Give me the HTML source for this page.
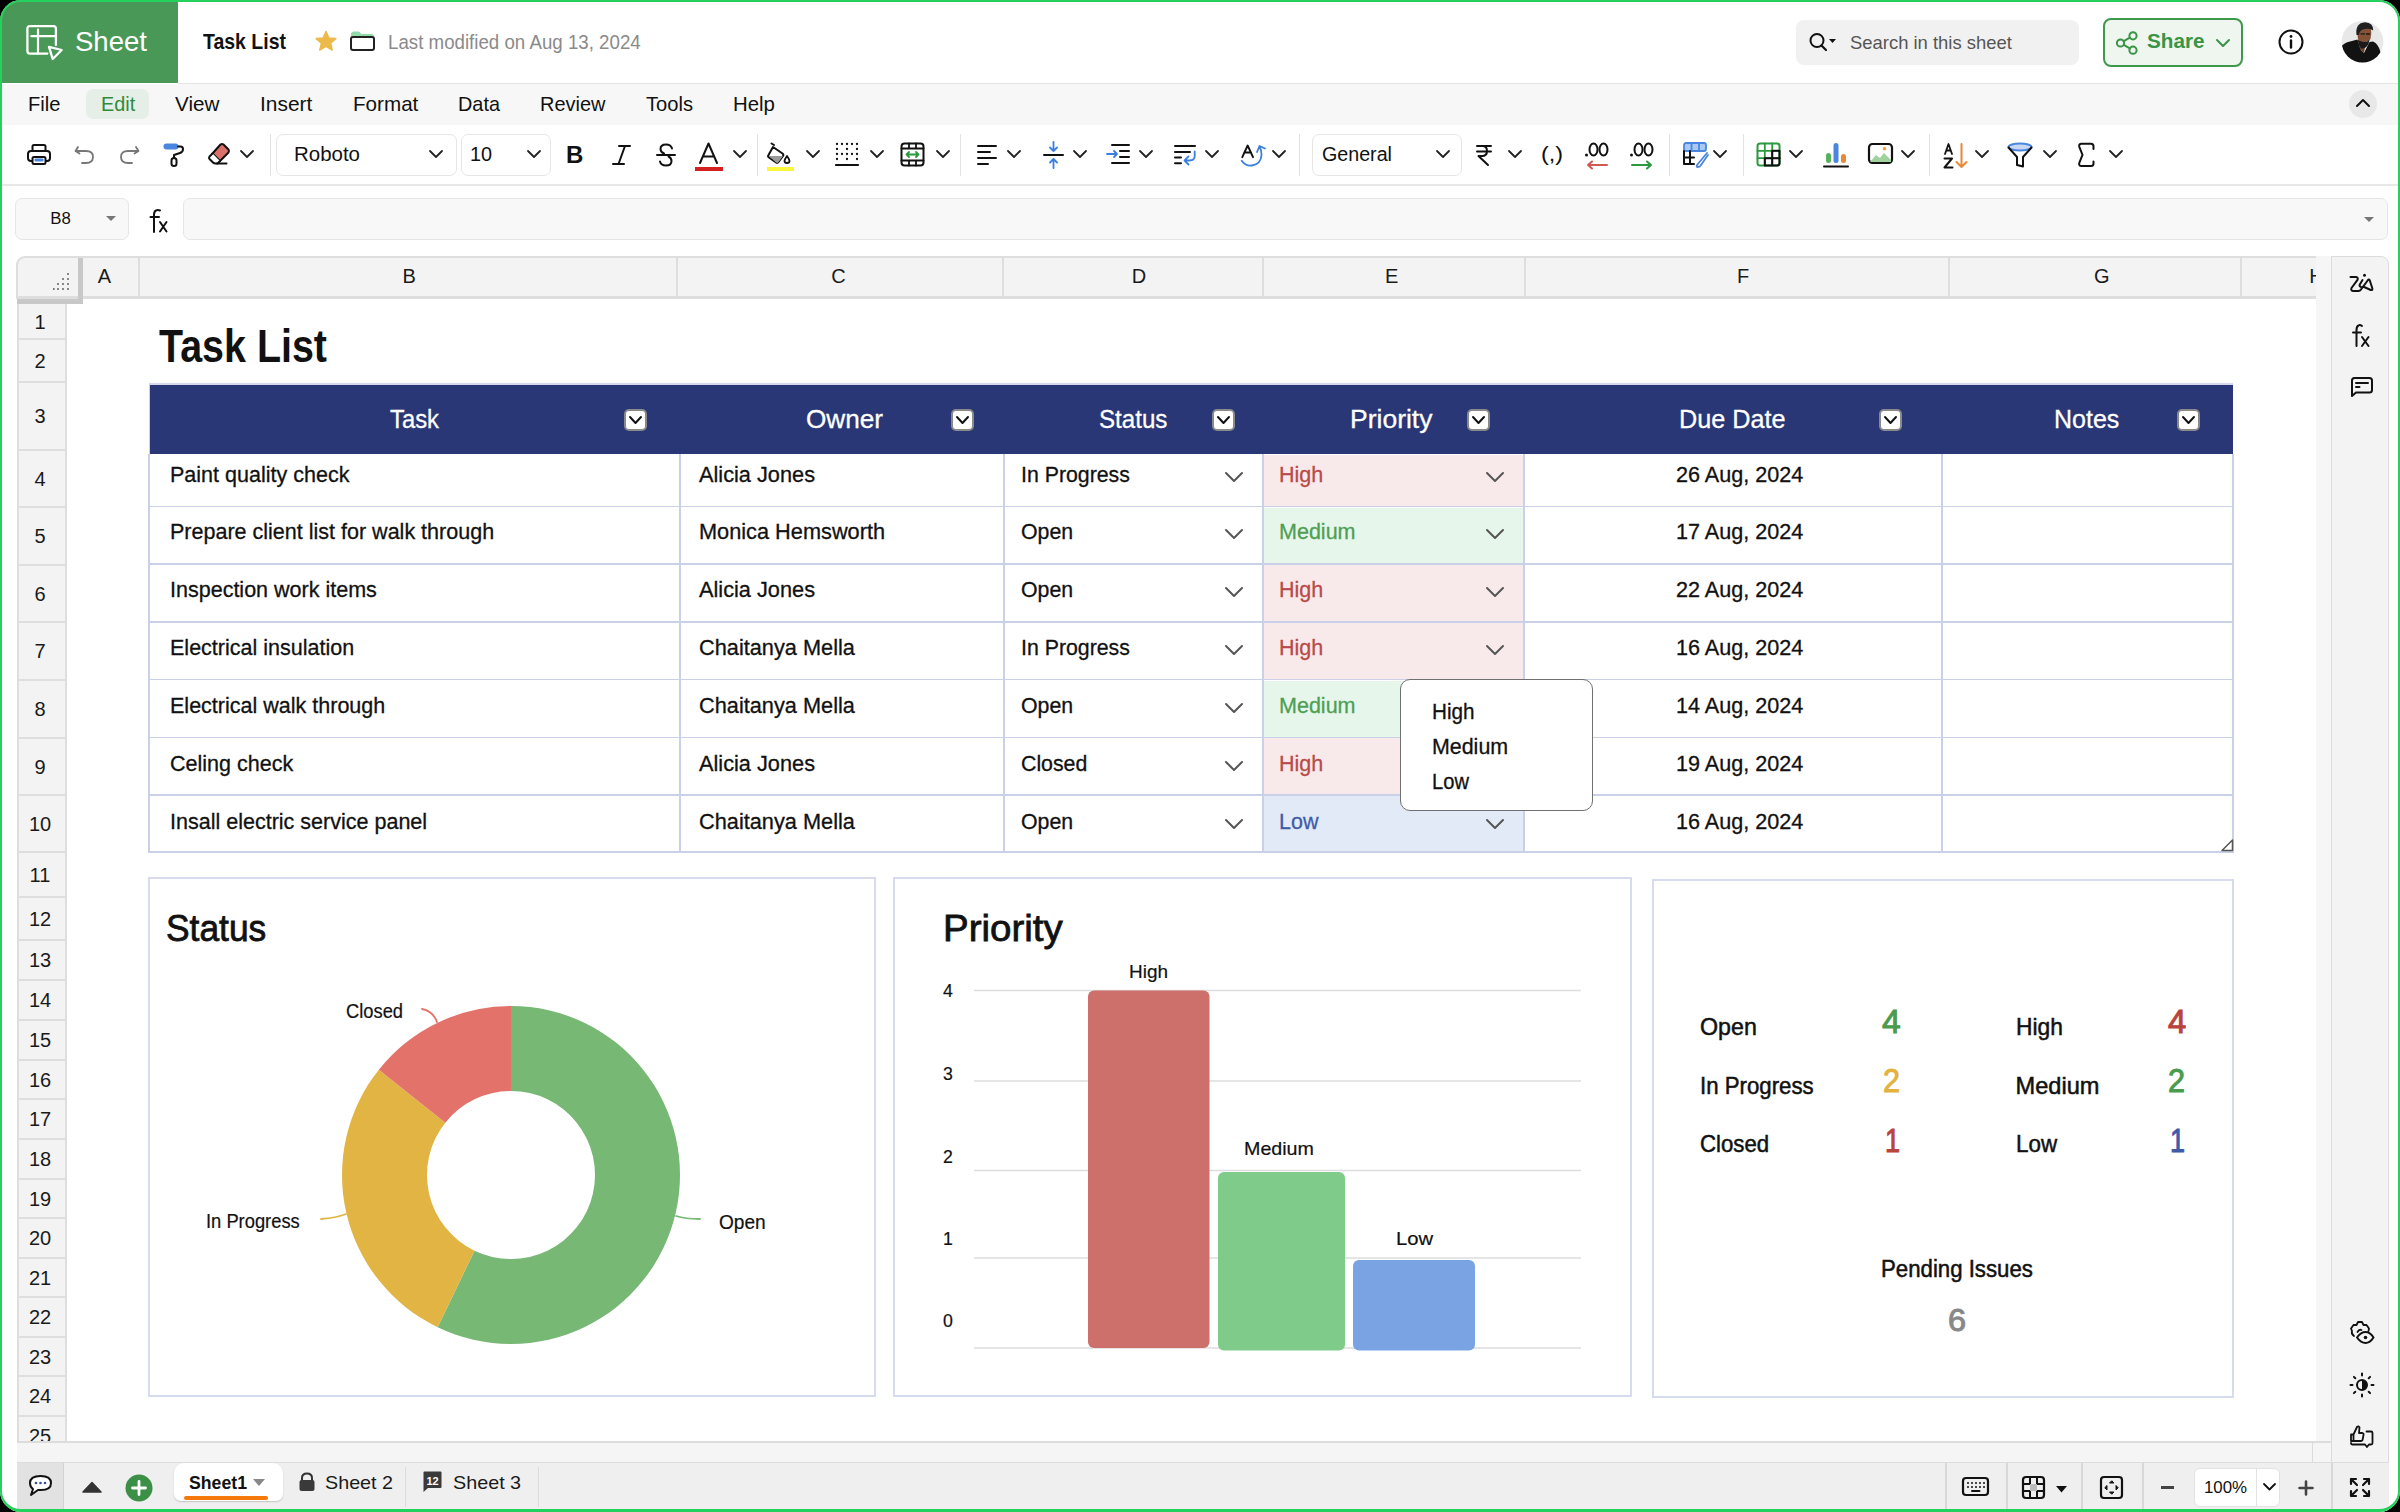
<!DOCTYPE html>
<html><head><meta charset="utf-8"><style>
html,body{margin:0;padding:0;width:2400px;height:1512px;overflow:hidden;background:#000;}
#win{position:absolute;left:0;top:0;width:2400px;height:1512px;border-radius:21px;overflow:hidden;background:#fff;font-family:"Liberation Sans", sans-serif;}
.t{position:absolute;line-height:1;white-space:nowrap;font-family:"Liberation Sans", sans-serif;}
.r{position:absolute;box-sizing:border-box;}
#frame{position:absolute;left:0;top:0;width:2400px;height:1512px;box-sizing:border-box;border:2px solid #24d15c;border-bottom-width:3px;border-radius:21px;pointer-events:none;}
</style></head><body><div id="win">
<div class="r" style="left:0px;top:0px;width:178px;height:83px;background:#4a9857;"></div><div class="r" style="left:178px;top:83px;width:2222px;height:1px;background:#e4e4e4;"></div><svg class="r" style="left:24px;top:24px;" width="40" height="40" viewBox="0 0 40 40" fill="none" stroke="#111" stroke-width="2" stroke-linecap="round" stroke-linejoin="round"><path d="M23.4 29.6 H5.9 Q3.4 29.6 3.4 27.1 V4.6 Q3.4 2.1 5.9 2.1 H29.4 Q31.9 2.1 31.9 4.6 V21" stroke="#fff" stroke-width="2.3"/><path d="M7.3 12.2 H31.9 M14 5.7 V29.6" stroke="#fff" stroke-width="2.2"/><path d="M25 22.8 L37.7 26 L28.7 35 Z" stroke="#fff" stroke-width="2.3"/></svg><div class="t" style="left:75.00px;top:28.11px;font-size:27.4px;color:#fff;transform:scaleX(1.0056);transform-origin:0 0;">Sheet</div><div class="t" style="left:203.00px;top:31.88px;font-size:21.4px;color:#111;font-weight:bold;transform:scaleX(0.9101);transform-origin:0 0;">Task List</div><svg class="r" style="left:314px;top:30px;" width="24" height="22" viewBox="0 0 24 22" fill="none" stroke="#111" stroke-width="2" stroke-linecap="round" stroke-linejoin="round"><path d="M12 1.5 L14.9 8 L21.8 8.6 L16.6 13.2 L18.2 20 L12 16.4 L5.8 20 L7.4 13.2 L2.2 8.6 L9.1 8 Z" fill="#ecb94b" stroke="#ecb94b" stroke-width="1.5"/></svg><svg class="r" style="left:349px;top:29px;" width="27" height="23" viewBox="0 0 27 23" fill="none" stroke="#111" stroke-width="2" stroke-linecap="round" stroke-linejoin="round"><path d="M2.5 8 V5 Q2.5 3 4.5 3 H10 L12.5 5.5 H22.5 Q24.5 5.5 24.5 7.5 V8 Z" fill="#8fdcaa" stroke="#8fdcaa" stroke-width="1"/><rect x="2" y="8" width="23" height="13" rx="2" stroke="#222" stroke-width="2"/></svg><div class="t" style="left:387.50px;top:33.06px;font-size:19.3px;color:#8a8a8a;transform:scaleX(0.9701);transform-origin:0 0;">Last modified on Aug 13, 2024</div><div class="r" style="left:1796px;top:20px;width:283px;height:45px;background:#f1f1f1;border-radius:8px;"></div><svg class="r" style="left:1808px;top:32px;" width="34" height="22" viewBox="0 0 34 22" fill="none" stroke="#111" stroke-width="2" stroke-linecap="round" stroke-linejoin="round"><circle cx="9" cy="8.5" r="6.5" stroke="#111" stroke-width="2"/><path d="M13.5 13.5 L18 18" stroke="#111" stroke-width="2.2"/><path d="M21 7 H28 L24.5 11 Z" fill="#111" stroke="none"/></svg><div class="t" style="left:1850.00px;top:34.26px;font-size:18.6px;color:#555;transform:scaleX(0.9914);transform-origin:0 0;">Search in this sheet</div><div class="r" style="left:2103px;top:18px;width:140px;height:49px;background:#eef6ef;border:2px solid #3e9a4a;border-radius:8px;"></div><svg class="r" style="left:2115px;top:31px;" width="26" height="24" viewBox="0 0 26 24" fill="none" stroke="#111" stroke-width="2" stroke-linecap="round" stroke-linejoin="round"><circle cx="5.5" cy="12" r="3.6" stroke="#3a9446" stroke-width="2"/><circle cx="18" cy="4.8" r="3.6" stroke="#3a9446" stroke-width="2"/><circle cx="18" cy="19.2" r="3.6" stroke="#3a9446" stroke-width="2"/><path d="M8.8 10.2 L14.8 6.6 M8.8 13.8 L14.8 17.4" stroke="#3a9446" stroke-width="2"/></svg><div class="t" style="left:2146.50px;top:31.19px;font-size:20.8px;color:#3a9446;font-weight:bold;transform:scaleX(0.9948);transform-origin:0 0;">Share</div><svg class="r" style="left:2215.0px;top:38.0px;" width="16" height="10" viewBox="0 0 16 10" fill="none" stroke="#111" stroke-width="2" stroke-linecap="round" stroke-linejoin="round"><path d="M2 2 L8.0 8 L14 2" stroke="#3a9446" stroke-width="2"/></svg><svg class="r" style="left:2277px;top:28px;" width="28" height="28" viewBox="0 0 28 28" fill="none" stroke="#111" stroke-width="2" stroke-linecap="round" stroke-linejoin="round"><circle cx="14" cy="14" r="11.5" stroke="#111" stroke-width="2"/><path d="M14 12.5 V19.5" stroke="#111" stroke-width="2.4"/><circle cx="14" cy="8.5" r="1.4" fill="#111" stroke="none"/></svg><svg class="r" style="left:2340px;top:20px;" width="46" height="46" viewBox="0 0 46 46" fill="none" stroke="#111" stroke-width="2" stroke-linecap="round" stroke-linejoin="round"><defs><clipPath id="av"><circle cx="22.5" cy="21.7" r="20.8"/></clipPath></defs><g clip-path="url(#av)" stroke="none"><rect width="46" height="46" fill="#e8e8e8"/><path d="M1 27 Q4 22.5 10 21.5 L17.5 19.5 L21 30 L24 33 L29.5 22 L33 21.5 Q38.5 24 40.5 32 L43 46 L0 46 Z" fill="#121212"/><path d="M18 21 L26 21 L24 33 L20 29 Z" fill="#6e4129"/><path d="M17.2 12 Q17 6 24 5.5 Q31.5 6 31.3 13 L30.5 19 Q28 22 24 22 Q19.5 22 18 19 Z" fill="#865235"/><path d="M16.5 15 Q15 3 25 2.2 Q33.5 2.5 33.2 10.5 L31 9.5 Q27 8 23 9.5 Q19.5 10.5 18.8 15 Z" fill="#202020"/><path d="M18 19.5 Q18.5 26 21.5 28.5 Q25.5 29 28.5 24 L29.6 19.5 Q27 22.5 23.5 22 Q20.5 21.8 18 19.5 Z" fill="#1a1a1a"/><path d="M21 13.8 H24.5 M26.5 14 H29.5" stroke="#1a1a1a" stroke-width="1.3"/></g></svg><div class="r" style="left:0px;top:84px;width:2400px;height:41px;background:#f7f7f7;"></div><div class="r" style="left:86px;top:89px;width:63px;height:30px;background:#e6efe7;border-radius:7px;"></div><div class="t" style="left:28.00px;top:94.02px;font-size:20.3px;color:#111;transform:scaleX(0.9908);transform-origin:0 0;">File</div><div class="t" style="left:100.60px;top:94.02px;font-size:20.3px;color:#2e8b3b;transform:scaleX(0.9771);transform-origin:0 0;">Edit</div><div class="t" style="left:175.00px;top:94.02px;font-size:20.3px;color:#111;transform:scaleX(1.0183);transform-origin:0 0;">View</div><div class="t" style="left:260.00px;top:94.02px;font-size:20.3px;color:#111;transform:scaleX(1.0315);transform-origin:0 0;">Insert</div><div class="t" style="left:352.60px;top:94.02px;font-size:20.3px;color:#111;transform:scaleX(1.0171);transform-origin:0 0;">Format</div><div class="t" style="left:457.80px;top:94.02px;font-size:20.3px;color:#111;transform:scaleX(0.9790);transform-origin:0 0;">Data</div><div class="t" style="left:540.00px;top:94.02px;font-size:20.3px;color:#111;transform:scaleX(0.9835);transform-origin:0 0;">Review</div><div class="t" style="left:645.90px;top:94.02px;font-size:20.3px;color:#111;transform:scaleX(0.9937);transform-origin:0 0;">Tools</div><div class="t" style="left:733.40px;top:94.02px;font-size:20.3px;color:#111;transform:scaleX(1.0048);transform-origin:0 0;">Help</div><div class="r" style="left:2349px;top:90px;width:28px;height:28px;background:#e8e8e8;border-radius:50%;"></div><svg class="r" style="left:2355px;top:98px;" width="16" height="10" viewBox="0 0 16 10" fill="none" stroke="#111" stroke-width="2" stroke-linecap="round" stroke-linejoin="round"><path d="M2 8 L8 2 L14 8" stroke="#111" stroke-width="2"/></svg><div class="r" style="left:0px;top:184px;width:2400px;height:2px;background:#e8e8e8;"></div><svg class="r" style="left:26px;top:142px;" width="26" height="26" viewBox="0 0 26 26" fill="none" stroke="#111" stroke-width="2" stroke-linecap="round" stroke-linejoin="round"><rect x="6.5" y="3" width="13" height="6" rx="1.5"/><rect x="2" y="9" width="22" height="10" rx="3"/><rect x="6.5" y="15" width="13" height="7" rx="1.5" fill="#fff"/><rect x="8.5" y="16.5" width="9" height="3" rx="1" fill="#4a86e0" stroke="none"/></svg><svg class="r" style="left:73px;top:143px;" width="24" height="24" viewBox="0 0 24 24" fill="none" stroke="#111" stroke-width="2" stroke-linecap="round" stroke-linejoin="round"><path d="M5 4 L2.5 8 L6.5 10.5" stroke="#777" stroke-width="1.8"/><path d="M3 8 H13 Q20 8 20 14 Q20 20 13 20 H9" stroke="#777" stroke-width="1.8"/></svg><svg class="r" style="left:117px;top:143px;" width="24" height="24" viewBox="0 0 24 24" fill="none" stroke="#111" stroke-width="2" stroke-linecap="round" stroke-linejoin="round"><path d="M19 4 L21.5 8 L17.5 10.5" stroke="#777" stroke-width="1.8"/><path d="M21 8 H11 Q4 8 4 14 Q4 20 11 20 H15" stroke="#777" stroke-width="1.8"/></svg><svg class="r" style="left:161px;top:142px;" width="26" height="26" viewBox="0 0 26 26" fill="none" stroke="#111" stroke-width="2" stroke-linecap="round" stroke-linejoin="round"><rect x="2.5" y="1.5" width="15" height="6" rx="3" fill="#4a86e0" stroke="none"/><path d="M17 4.5 H19.5 Q22 4.5 22 7 Q22 10 19 11 L13 13 V16" stroke="#111" stroke-width="2"/><rect x="10.5" y="16" width="5" height="8" rx="2.5" stroke="#111" stroke-width="2"/></svg><svg class="r" style="left:207px;top:142px;" width="28" height="26" viewBox="0 0 28 26" fill="none" stroke="#111" stroke-width="2" stroke-linecap="round" stroke-linejoin="round"><path d="M13.5 2.5 Q15 1.5 16.5 2.5 L21.5 7.5 Q22.5 9 21.5 10.5 L13 19 L5.5 11.5 Z" fill="#d9706a" stroke="#111" stroke-width="2"/><path d="M5.5 11.5 L2.5 14.5 Q1.5 16 2.5 17 L6 20.5 Q7 21.5 8.5 21.5 H10.5 L13 19" stroke="#111" stroke-width="2" fill="#fff"/><path d="M10 21.5 H19.5" stroke="#111" stroke-width="2"/></svg><svg class="r" style="left:239.0px;top:149.0px;" width="16" height="10" viewBox="0 0 16 10" fill="none" stroke="#111" stroke-width="2" stroke-linecap="round" stroke-linejoin="round"><path d="M2 2 L8.0 8 L14 2" stroke="#222" stroke-width="1.8"/></svg><div class="r" style="left:270px;top:134px;width:1px;height:42px;background:#e2e2e2;"></div><div class="r" style="left:276px;top:134px;width:181px;height:42px;border:1.5px solid #e6e6e6;border-radius:7px;"></div><div class="t" style="left:294.00px;top:144.07px;font-size:20px;color:#111;transform:scaleX(1.0233);transform-origin:0 0;">Roboto</div><svg class="r" style="left:428.0px;top:149.0px;" width="16" height="10" viewBox="0 0 16 10" fill="none" stroke="#111" stroke-width="2" stroke-linecap="round" stroke-linejoin="round"><path d="M2 2 L8.0 8 L14 2" stroke="#222" stroke-width="1.8"/></svg><div class="r" style="left:461px;top:134px;width:90px;height:42px;border:1.5px solid #e6e6e6;border-radius:7px;"></div><div class="t" style="left:470.00px;top:144.07px;font-size:20px;color:#111;transform:scaleX(0.9910);transform-origin:0 0;">10</div><svg class="r" style="left:526.0px;top:149.0px;" width="16" height="10" viewBox="0 0 16 10" fill="none" stroke="#111" stroke-width="2" stroke-linecap="round" stroke-linejoin="round"><path d="M2 2 L8.0 8 L14 2" stroke="#222" stroke-width="1.8"/></svg><div class="t" style="left:566.00px;top:143.18px;font-size:24px;color:#111;font-weight:bold;">B</div><svg class="r" style="left:610px;top:143px;" width="22" height="24" viewBox="0 0 22 24" fill="none" stroke="#111" stroke-width="2" stroke-linecap="round" stroke-linejoin="round"><path d="M9 3 H20 M3 21 H14 M15 3 L8.5 21" stroke="#111" stroke-width="2"/></svg><svg class="r" style="left:655px;top:141px;" width="22" height="28" viewBox="0 0 22 28" fill="none" stroke="#111" stroke-width="2" stroke-linecap="round" stroke-linejoin="round"><path d="M17 7.5 Q16 3.5 11 3.5 Q5.5 3.5 5.5 8 Q5.5 11 9 12.5 M2 14 H20 M13.5 15.5 Q16.5 17 16.5 20 Q16.5 24.5 11 24.5 Q6 24.5 5 20.5" stroke="#111" stroke-width="2"/></svg><svg class="r" style="left:694px;top:141px;" width="30" height="32" viewBox="0 0 30 32" fill="none" stroke="#111" stroke-width="2" stroke-linecap="round" stroke-linejoin="round"><path d="M6 22 L14.5 2.5 L23 22 M9 15.5 H20" stroke="#111" stroke-width="2"/><rect x="1" y="26" width="28" height="4" fill="#d42020" stroke="none"/></svg><svg class="r" style="left:732.0px;top:149.0px;" width="16" height="10" viewBox="0 0 16 10" fill="none" stroke="#111" stroke-width="2" stroke-linecap="round" stroke-linejoin="round"><path d="M2 2 L8.0 8 L14 2" stroke="#222" stroke-width="1.8"/></svg><div class="r" style="left:757px;top:134px;width:1px;height:42px;background:#e2e2e2;"></div><svg class="r" style="left:765px;top:141px;" width="32" height="32" viewBox="0 0 32 32" fill="none" stroke="#111" stroke-width="2" stroke-linecap="round" stroke-linejoin="round"><path d="M9 4 L6.5 2.5 M8 6 L17.5 12.5 Q19 13.5 18 15 L13.5 21 Q12.5 22.5 11 21.5 L4 16.5 Q2.5 15.5 3.5 14 Z" stroke="#111" stroke-width="2"/><path d="M4 15 L18 15 L13.5 21 Q12.5 22.5 11 21.5 Z" fill="#999" stroke="none"/><path d="M22 15 Q24.5 18.5 24.5 20 Q24.5 22 22 22 Q19.5 22 19.5 20 Q19.5 18.5 22 15 Z" stroke="#111" stroke-width="1.8"/><rect x="2" y="26" width="27" height="4" fill="#fbf53c" stroke="none"/></svg><svg class="r" style="left:805.0px;top:149.0px;" width="16" height="10" viewBox="0 0 16 10" fill="none" stroke="#111" stroke-width="2" stroke-linecap="round" stroke-linejoin="round"><path d="M2 2 L8.0 8 L14 2" stroke="#222" stroke-width="1.8"/></svg><svg class="r" style="left:835px;top:142px;" width="26" height="26" viewBox="0 0 26 26" fill="none" stroke="#111" stroke-width="2" stroke-linecap="round" stroke-linejoin="round"><circle cx="2" cy="2" r="1.15" fill="#111" stroke="none"/><circle cx="2" cy="7" r="1.15" fill="#111" stroke="none"/><circle cx="2" cy="12" r="1.15" fill="#111" stroke="none"/><circle cx="2" cy="17" r="1.15" fill="#111" stroke="none"/><circle cx="7" cy="2" r="1.15" fill="#111" stroke="none"/><circle cx="7" cy="12" r="1.15" fill="#111" stroke="none"/><circle cx="12" cy="2" r="1.15" fill="#111" stroke="none"/><circle cx="12" cy="7" r="1.15" fill="#111" stroke="none"/><circle cx="12" cy="12" r="1.15" fill="#111" stroke="none"/><circle cx="12" cy="17" r="1.15" fill="#111" stroke="none"/><circle cx="17" cy="2" r="1.15" fill="#111" stroke="none"/><circle cx="17" cy="12" r="1.15" fill="#111" stroke="none"/><circle cx="22" cy="2" r="1.15" fill="#111" stroke="none"/><circle cx="22" cy="7" r="1.15" fill="#111" stroke="none"/><circle cx="22" cy="12" r="1.15" fill="#111" stroke="none"/><circle cx="22" cy="17" r="1.15" fill="#111" stroke="none"/><path d="M1 23 H23" stroke="#111" stroke-width="2.2"/></svg><svg class="r" style="left:869.0px;top:149.0px;" width="16" height="10" viewBox="0 0 16 10" fill="none" stroke="#111" stroke-width="2" stroke-linecap="round" stroke-linejoin="round"><path d="M2 2 L8.0 8 L14 2" stroke="#222" stroke-width="1.8"/></svg><svg class="r" style="left:900px;top:142px;" width="26" height="26" viewBox="0 0 26 26" fill="none" stroke="#111" stroke-width="2" stroke-linecap="round" stroke-linejoin="round"><rect x="1.5" y="1.5" width="22" height="22" rx="3" stroke="#111" stroke-width="2"/><path d="M1.5 6.5 H23.5 M1.5 18.5 H23.5 M9 1.5 V6.5 M16 1.5 V6.5 M9 18.5 V23.5 M16 18.5 V23.5" stroke="#111" stroke-width="1.8"/><path d="M6.5 12.5 H18.5 M9 10 L6.5 12.5 L9 15 M16 10 L18.5 12.5 L16 15" stroke="#2b9a3e" stroke-width="1.8"/></svg><svg class="r" style="left:935.0px;top:149.0px;" width="16" height="10" viewBox="0 0 16 10" fill="none" stroke="#111" stroke-width="2" stroke-linecap="round" stroke-linejoin="round"><path d="M2 2 L8.0 8 L14 2" stroke="#222" stroke-width="1.8"/></svg><div class="r" style="left:960px;top:134px;width:1px;height:42px;background:#e2e2e2;"></div><svg class="r" style="left:976px;top:142px;" width="24" height="26" viewBox="0 0 24 26" fill="none" stroke="#111" stroke-width="2" stroke-linecap="round" stroke-linejoin="round"><path d="M2 4 H20 M2 10 H14 M2 16 H20 M2 22 H12" stroke="#111" stroke-width="2"/></svg><svg class="r" style="left:1006.0px;top:149.0px;" width="16" height="10" viewBox="0 0 16 10" fill="none" stroke="#111" stroke-width="2" stroke-linecap="round" stroke-linejoin="round"><path d="M2 2 L8.0 8 L14 2" stroke="#222" stroke-width="1.8"/></svg><svg class="r" style="left:1042px;top:140px;" width="24" height="30" viewBox="0 0 24 30" fill="none" stroke="#111" stroke-width="2" stroke-linecap="round" stroke-linejoin="round"><path d="M2 15 H21" stroke="#111" stroke-width="2"/><path d="M11.5 2 V11 M8 7.5 L11.5 11 L15 7.5 M11.5 28 V19 M8 22.5 L11.5 19 L15 22.5" stroke="#3a7ee0" stroke-width="1.8"/></svg><svg class="r" style="left:1072.0px;top:149.0px;" width="16" height="10" viewBox="0 0 16 10" fill="none" stroke="#111" stroke-width="2" stroke-linecap="round" stroke-linejoin="round"><path d="M2 2 L8.0 8 L14 2" stroke="#222" stroke-width="1.8"/></svg><svg class="r" style="left:1106px;top:142px;" width="26" height="26" viewBox="0 0 26 26" fill="none" stroke="#111" stroke-width="2" stroke-linecap="round" stroke-linejoin="round"><path d="M6 3 H23 M14 9 H23 M14 15 H23 M6 21 H23" stroke="#111" stroke-width="2"/><path d="M1 12 H11 M8 9 L11 12 L8 15" stroke="#3a7ee0" stroke-width="1.8"/></svg><svg class="r" style="left:1138.0px;top:149.0px;" width="16" height="10" viewBox="0 0 16 10" fill="none" stroke="#111" stroke-width="2" stroke-linecap="round" stroke-linejoin="round"><path d="M2 2 L8.0 8 L14 2" stroke="#222" stroke-width="1.8"/></svg><svg class="r" style="left:1172px;top:142px;" width="28" height="26" viewBox="0 0 28 26" fill="none" stroke="#111" stroke-width="2" stroke-linecap="round" stroke-linejoin="round"><path d="M3 4.1 H23 M3 9.9 H18 M3 15.5 H9 M3 21.3 H9" stroke="#111" stroke-width="2"/><path d="M22.7 9.5 V14 Q22.7 18.5 17.5 18.5 H12.5 M16.5 14.4 L12.5 18.5 L16.5 22.5" stroke="#3a7ee0" stroke-width="1.8"/></svg><svg class="r" style="left:1204.0px;top:149.0px;" width="16" height="10" viewBox="0 0 16 10" fill="none" stroke="#111" stroke-width="2" stroke-linecap="round" stroke-linejoin="round"><path d="M2 2 L8.0 8 L14 2" stroke="#222" stroke-width="1.8"/></svg><svg class="r" style="left:1239px;top:140px;" width="28" height="30" viewBox="0 0 28 30" fill="none" stroke="#111" stroke-width="2" stroke-linecap="round" stroke-linejoin="round"><path d="M3.3 17.2 L8.65 5.5 L14 17.2 M5.2 12.5 H12.1" stroke="#111" stroke-width="1.9"/><path d="M2.7 20.7 Q7 26.5 13 25.5 Q22 24 22.5 15 Q22.5 10 20.5 6.5 M18 12 L20.5 6 L26 8.5" stroke="#3a7ee0" stroke-width="1.8"/></svg><svg class="r" style="left:1271.0px;top:149.0px;" width="16" height="10" viewBox="0 0 16 10" fill="none" stroke="#111" stroke-width="2" stroke-linecap="round" stroke-linejoin="round"><path d="M2 2 L8.0 8 L14 2" stroke="#222" stroke-width="1.8"/></svg><div class="r" style="left:1299px;top:134px;width:1px;height:42px;background:#e2e2e2;"></div><div class="r" style="left:1312px;top:134px;width:150px;height:42px;border:1.5px solid #e6e6e6;border-radius:7px;"></div><div class="t" style="left:1322.00px;top:144.07px;font-size:20px;color:#111;transform:scaleX(0.9831);transform-origin:0 0;">General</div><svg class="r" style="left:1435.0px;top:149.0px;" width="16" height="10" viewBox="0 0 16 10" fill="none" stroke="#111" stroke-width="2" stroke-linecap="round" stroke-linejoin="round"><path d="M2 2 L8.0 8 L14 2" stroke="#222" stroke-width="1.8"/></svg><svg class="r" style="left:1474px;top:142px;" width="20" height="26" viewBox="0 0 20 26" fill="none" stroke="#111" stroke-width="2" stroke-linecap="round" stroke-linejoin="round"><path d="M3 4 H17 M3 9.5 H17 M5 4 H8.5 Q13 4 13 9 Q13 14 8 14 H4.5 L14 23" stroke="#111" stroke-width="2"/></svg><svg class="r" style="left:1507.0px;top:149.0px;" width="16" height="10" viewBox="0 0 16 10" fill="none" stroke="#111" stroke-width="2" stroke-linecap="round" stroke-linejoin="round"><path d="M2 2 L8.0 8 L14 2" stroke="#222" stroke-width="1.8"/></svg><div class="t" style="left:1540.70px;top:142.72px;font-size:21px;color:#111;transform:scaleX(1.1111);transform-origin:0 0;">(,)</div><svg class="r" style="left:1584px;top:141px;" width="26" height="30" viewBox="0 0 26 30" fill="none" stroke="#111" stroke-width="2" stroke-linecap="round" stroke-linejoin="round"><circle cx="2.5" cy="14" r="1.5" fill="#111" stroke="none"/><ellipse cx="9.5" cy="8.5" rx="4" ry="6" stroke="#111" stroke-width="2"/><ellipse cx="19.5" cy="8.5" rx="4" ry="6" stroke="#111" stroke-width="2"/><path d="M23 24 H4 M8 20.5 L4 24 L8 27.5" stroke="#d05a52" stroke-width="2"/></svg><svg class="r" style="left:1629px;top:141px;" width="26" height="30" viewBox="0 0 26 30" fill="none" stroke="#111" stroke-width="2" stroke-linecap="round" stroke-linejoin="round"><circle cx="2.5" cy="14" r="1.5" fill="#111" stroke="none"/><ellipse cx="9.5" cy="8.5" rx="4" ry="6" stroke="#111" stroke-width="2"/><ellipse cx="19.5" cy="8.5" rx="4" ry="6" stroke="#111" stroke-width="2"/><path d="M3 24 H22 M18 20.5 L22 24 L18 27.5" stroke="#2b9a3e" stroke-width="2"/></svg><div class="r" style="left:1669px;top:134px;width:1px;height:42px;background:#e2e2e2;"></div><svg class="r" style="left:1682px;top:141px;" width="30" height="30" viewBox="0 0 30 30" fill="none" stroke="#111" stroke-width="2" stroke-linecap="round" stroke-linejoin="round"><rect x="2" y="2" width="22" height="8" rx="2" fill="#a9c8f2" stroke="#4a86e0" stroke-width="1.8"/><path d="M9.5 2 V10 M17 2 V10" stroke="#4a86e0" stroke-width="1.8"/><path d="M2 10 V23 H12 M2 16.5 H12 M8 10 V23" stroke="#111" stroke-width="2"/><path d="M25 12 L15 24 Q14 26 16 26 Q18 26 19 24 L26 14" stroke="#4a86e0" stroke-width="1.8"/></svg><svg class="r" style="left:1712.0px;top:149.0px;" width="16" height="10" viewBox="0 0 16 10" fill="none" stroke="#111" stroke-width="2" stroke-linecap="round" stroke-linejoin="round"><path d="M2 2 L8.0 8 L14 2" stroke="#222" stroke-width="1.8"/></svg><div class="r" style="left:1743px;top:134px;width:1px;height:42px;background:#e2e2e2;"></div><svg class="r" style="left:1756px;top:142px;" width="26" height="26" viewBox="0 0 26 26" fill="none" stroke="#111" stroke-width="2" stroke-linecap="round" stroke-linejoin="round"><rect x="1.5" y="1.5" width="22" height="22" rx="2.5" stroke="#2b9a3e" stroke-width="2"/><path d="M1.5 8.8 H23.5 M1.5 16.2 H23.5 M8.8 1.5 V23.5 M16.2 1.5 V23.5" stroke="#2b9a3e" stroke-width="1.8"/><path d="M8.8 16.2 H23.5 V21 Q23.5 23.5 21 23.5 H8.8 Z M16.2 16.2 V23.5" stroke="#111" stroke-width="2"/><path d="M16.2 8.8 H23.5 V16.2 M16.2 8.8 V16.2" stroke="#111" stroke-width="2"/></svg><svg class="r" style="left:1788.0px;top:149.0px;" width="16" height="10" viewBox="0 0 16 10" fill="none" stroke="#111" stroke-width="2" stroke-linecap="round" stroke-linejoin="round"><path d="M2 2 L8.0 8 L14 2" stroke="#222" stroke-width="1.8"/></svg><svg class="r" style="left:1822px;top:141px;" width="28" height="28" viewBox="0 0 28 28" fill="none" stroke="#111" stroke-width="2" stroke-linecap="round" stroke-linejoin="round"><rect x="4" y="12" width="5" height="10" rx="2.5" fill="#57b25c" stroke="none"/><rect x="11.5" y="2" width="5" height="20" rx="2.5" fill="#4a86e0" stroke="none"/><rect x="19" y="13" width="5" height="9" rx="2.5" fill="#e8893a" stroke="none"/><path d="M2 25.5 H26" stroke="#111" stroke-width="2"/></svg><svg class="r" style="left:1867px;top:142px;" width="28" height="24" viewBox="0 0 28 24" fill="none" stroke="#111" stroke-width="2" stroke-linecap="round" stroke-linejoin="round"><rect x="2" y="2" width="23" height="19" rx="3.5" stroke="#111" stroke-width="2.2"/><path d="M3 20 L9 13 L13 16 L17 11 L24 18 V20 Z" fill="#9fd29c" stroke="none"/><circle cx="17.5" cy="6.8" r="1.8" fill="#f0a040" stroke="none"/></svg><svg class="r" style="left:1900.0px;top:149.0px;" width="16" height="10" viewBox="0 0 16 10" fill="none" stroke="#111" stroke-width="2" stroke-linecap="round" stroke-linejoin="round"><path d="M2 2 L8.0 8 L14 2" stroke="#222" stroke-width="1.8"/></svg><div class="r" style="left:1929px;top:134px;width:1px;height:42px;background:#e2e2e2;"></div><svg class="r" style="left:1942px;top:141px;" width="28" height="30" viewBox="0 0 28 30" fill="none" stroke="#111" stroke-width="2" stroke-linecap="round" stroke-linejoin="round"><path d="M3 13 L6.5 3 L10 13 M4.2 9.5 H8.8" stroke="#111" stroke-width="1.8"/><path d="M2.5 17.5 H10 L2.5 26.5 H10.5" stroke="#111" stroke-width="2"/><path d="M19.5 3 V26 M14.5 21 L19.5 26 L24.5 21" stroke="#e8893a" stroke-width="2"/></svg><svg class="r" style="left:1974.0px;top:149.0px;" width="16" height="10" viewBox="0 0 16 10" fill="none" stroke="#111" stroke-width="2" stroke-linecap="round" stroke-linejoin="round"><path d="M2 2 L8.0 8 L14 2" stroke="#222" stroke-width="1.8"/></svg><svg class="r" style="left:2006px;top:142px;" width="28" height="26" viewBox="0 0 28 26" fill="none" stroke="#111" stroke-width="2" stroke-linecap="round" stroke-linejoin="round"><ellipse cx="14" cy="5" rx="11.5" ry="3.5" fill="#c9d8f2" stroke="#4a86e0" stroke-width="2"/><path d="M2.5 5.5 L11 15 V23 L17 24.5 V15 L25.5 5.5" stroke="#111" stroke-width="2"/></svg><svg class="r" style="left:2042.0px;top:149.0px;" width="16" height="10" viewBox="0 0 16 10" fill="none" stroke="#111" stroke-width="2" stroke-linecap="round" stroke-linejoin="round"><path d="M2 2 L8.0 8 L14 2" stroke="#222" stroke-width="1.8"/></svg><svg class="r" style="left:2076px;top:141px;" width="22" height="28" viewBox="0 0 22 28" fill="none" stroke="#111" stroke-width="2" stroke-linecap="round" stroke-linejoin="round"><path d="M17.5 8 V5.5 Q17.5 2.8 15 2.8 H5.5 Q2.5 2.8 3.3 5.8 L6.5 13.8 L3.3 21.8 Q2.5 25 5.5 25 H15 Q17.5 25 17.5 22.5 V20.5" stroke="#111" stroke-width="2"/></svg><svg class="r" style="left:2108.0px;top:149.0px;" width="16" height="10" viewBox="0 0 16 10" fill="none" stroke="#111" stroke-width="2" stroke-linecap="round" stroke-linejoin="round"><path d="M2 2 L8.0 8 L14 2" stroke="#222" stroke-width="1.8"/></svg><div class="r" style="left:15px;top:198px;width:114px;height:42px;background:#f8f8f8;border:1.5px solid #e5e5e5;border-radius:7px;"></div><div class="t" style="left:50.20px;top:210.78px;font-size:16.8px;color:#111;">B8</div><svg class="r" style="left:105px;top:215px;" width="12" height="7" viewBox="0 0 12 7" fill="none" stroke="#111" stroke-width="2" stroke-linecap="round" stroke-linejoin="round"><path d="M1 1 H11 L6 6 Z" fill="#777" stroke="none"/></svg><svg class="r" style="left:148px;top:207px;" width="22" height="28" viewBox="0 0 22 28" fill="none" stroke="#111" stroke-width="2" stroke-linecap="round" stroke-linejoin="round"><path d="M12 3.5 Q9.5 2.5 8 3.5 Q6 4.5 6 8 V25 M2.5 10 H11" stroke="#111" stroke-width="2"/><path d="M12 15 L18.5 24.5 M18.5 15 L12 24.5" stroke="#111" stroke-width="2"/></svg><div class="r" style="left:183px;top:198px;width:2205px;height:42px;background:#f8f8f8;border:1.5px solid #e5e5e5;border-radius:7px;"></div><svg class="r" style="left:2363px;top:216px;" width="12" height="7" viewBox="0 0 12 7" fill="none" stroke="#111" stroke-width="2" stroke-linecap="round" stroke-linejoin="round"><path d="M1 1 H11 L6 6 Z" fill="#777" stroke="none"/></svg><div class="r" style="left:16px;top:256px;width:2300px;height:43px;background:#f3f3f3;border-top:2px solid #dedede;border-bottom:3px solid #dedede;border-left:2px solid #dedede;border-top-left-radius:9px;"></div><div class="r" style="left:138px;top:258px;width:2px;height:38px;background:#dedede;"></div><div class="r" style="left:676px;top:258px;width:2px;height:38px;background:#dedede;"></div><div class="r" style="left:1002px;top:258px;width:2px;height:38px;background:#dedede;"></div><div class="r" style="left:1262px;top:258px;width:2px;height:38px;background:#dedede;"></div><div class="r" style="left:1524px;top:258px;width:2px;height:38px;background:#dedede;"></div><div class="r" style="left:1948px;top:258px;width:2px;height:38px;background:#dedede;"></div><div class="r" style="left:2240px;top:258px;width:2px;height:38px;background:#dedede;"></div><div class="t" style="left:97.80px;top:265.87px;font-size:20px;color:#1a1a1a;">A</div><div class="t" style="left:402.55px;top:265.87px;font-size:20px;color:#1a1a1a;">B</div><div class="t" style="left:831.30px;top:265.87px;font-size:20px;color:#1a1a1a;">C</div><div class="t" style="left:1131.80px;top:265.87px;font-size:20px;color:#1a1a1a;">D</div><div class="t" style="left:1384.95px;top:265.87px;font-size:20px;color:#1a1a1a;">E</div><div class="t" style="left:1736.90px;top:265.87px;font-size:20px;color:#1a1a1a;">F</div><div class="t" style="left:2094.10px;top:265.87px;font-size:20px;color:#1a1a1a;">G</div><div class="t" style="left:2309.20px;top:265.87px;font-size:20px;color:#1a1a1a;">H</div><div class="r" style="left:2316px;top:256px;width:16px;height:1206px;background:#f6f6f6;border-right:1.5px solid #dcdcdc;"></div><div class="r" style="left:78px;top:258px;width:5px;height:46px;background:#c8c8c8;"></div><div class="r" style="left:17px;top:299px;width:66px;height:5px;background:#c8c8c8;"></div><svg class="r" style="left:53px;top:272px;" width="18" height="20" viewBox="0 0 18 20" fill="none" stroke="#111" stroke-width="2" stroke-linecap="round" stroke-linejoin="round"><circle cx="15" cy="2" r="0.9" fill="#555" stroke="none"/><circle cx="15" cy="7" r="0.9" fill="#555" stroke="none"/><circle cx="10" cy="7" r="0.9" fill="#555" stroke="none"/><circle cx="15" cy="12" r="0.9" fill="#555" stroke="none"/><circle cx="10" cy="12" r="0.9" fill="#555" stroke="none"/><circle cx="5" cy="12" r="0.9" fill="#555" stroke="none"/><circle cx="15" cy="17" r="0.9" fill="#555" stroke="none"/><circle cx="10" cy="17" r="0.9" fill="#555" stroke="none"/><circle cx="5" cy="17" r="0.9" fill="#555" stroke="none"/><circle cx="0.8" cy="17" r="0.9" fill="#555" stroke="none"/></svg><div class="r" style="left:17px;top:304px;width:50px;height:1138px;background:#f3f3f3;border-left:2px solid #dedede;border-right:2px solid #dedede;"></div><div class="r" style="left:17px;top:337.5px;width:50px;height:2px;background:#dedede;"></div><div class="r" style="left:17px;top:381px;width:50px;height:2px;background:#dedede;"></div><div class="r" style="left:17px;top:449px;width:50px;height:2px;background:#dedede;"></div><div class="r" style="left:17px;top:506px;width:50px;height:2px;background:#dedede;"></div><div class="r" style="left:17px;top:563.5px;width:50px;height:2px;background:#dedede;"></div><div class="r" style="left:17px;top:621px;width:50px;height:2px;background:#dedede;"></div><div class="r" style="left:17px;top:679px;width:50px;height:2px;background:#dedede;"></div><div class="r" style="left:17px;top:736.5px;width:50px;height:2px;background:#dedede;"></div><div class="r" style="left:17px;top:794px;width:50px;height:2px;background:#dedede;"></div><div class="r" style="left:17px;top:851px;width:50px;height:2px;background:#dedede;"></div><div class="r" style="left:17px;top:896px;width:50px;height:2px;background:#dedede;"></div><div class="r" style="left:17px;top:939px;width:50px;height:2px;background:#dedede;"></div><div class="r" style="left:17px;top:979px;width:50px;height:2px;background:#dedede;"></div><div class="r" style="left:17px;top:1019px;width:50px;height:2px;background:#dedede;"></div><div class="r" style="left:17px;top:1059px;width:50px;height:2px;background:#dedede;"></div><div class="r" style="left:17px;top:1098px;width:50px;height:2px;background:#dedede;"></div><div class="r" style="left:17px;top:1138px;width:50px;height:2px;background:#dedede;"></div><div class="r" style="left:17px;top:1178px;width:50px;height:2px;background:#dedede;"></div><div class="r" style="left:17px;top:1217px;width:50px;height:2px;background:#dedede;"></div><div class="r" style="left:17px;top:1257px;width:50px;height:2px;background:#dedede;"></div><div class="r" style="left:17px;top:1296px;width:50px;height:2px;background:#dedede;"></div><div class="r" style="left:17px;top:1336px;width:50px;height:2px;background:#dedede;"></div><div class="r" style="left:17px;top:1375px;width:50px;height:2px;background:#dedede;"></div><div class="r" style="left:17px;top:1415px;width:50px;height:2px;background:#dedede;"></div><div class="t" style="left:34.45px;top:311.52px;font-size:20px;color:#1a1a1a;">1</div><div class="t" style="left:34.45px;top:350.52px;font-size:20px;color:#1a1a1a;">2</div><div class="t" style="left:34.45px;top:406.27px;font-size:20px;color:#1a1a1a;">3</div><div class="t" style="left:34.45px;top:468.77px;font-size:20px;color:#1a1a1a;">4</div><div class="t" style="left:34.45px;top:526.02px;font-size:20px;color:#1a1a1a;">5</div><div class="t" style="left:34.45px;top:583.52px;font-size:20px;color:#1a1a1a;">6</div><div class="t" style="left:34.45px;top:641.27px;font-size:20px;color:#1a1a1a;">7</div><div class="t" style="left:34.45px;top:699.02px;font-size:20px;color:#1a1a1a;">8</div><div class="t" style="left:34.45px;top:756.52px;font-size:20px;color:#1a1a1a;">9</div><div class="t" style="left:28.90px;top:813.77px;font-size:20px;color:#1a1a1a;">10</div><div class="t" style="left:29.60px;top:864.77px;font-size:20px;color:#1a1a1a;">11</div><div class="t" style="left:28.90px;top:908.77px;font-size:20px;color:#1a1a1a;">12</div><div class="t" style="left:28.90px;top:950.27px;font-size:20px;color:#1a1a1a;">13</div><div class="t" style="left:28.90px;top:990.27px;font-size:20px;color:#1a1a1a;">14</div><div class="t" style="left:28.90px;top:1030.27px;font-size:20px;color:#1a1a1a;">15</div><div class="t" style="left:28.90px;top:1069.77px;font-size:20px;color:#1a1a1a;">16</div><div class="t" style="left:28.90px;top:1109.27px;font-size:20px;color:#1a1a1a;">17</div><div class="t" style="left:28.90px;top:1149.27px;font-size:20px;color:#1a1a1a;">18</div><div class="t" style="left:28.90px;top:1188.77px;font-size:20px;color:#1a1a1a;">19</div><div class="t" style="left:28.90px;top:1228.27px;font-size:20px;color:#1a1a1a;">20</div><div class="t" style="left:28.90px;top:1267.77px;font-size:20px;color:#1a1a1a;">21</div><div class="t" style="left:28.90px;top:1307.27px;font-size:20px;color:#1a1a1a;">22</div><div class="t" style="left:28.90px;top:1346.77px;font-size:20px;color:#1a1a1a;">23</div><div class="t" style="left:28.90px;top:1386.27px;font-size:20px;color:#1a1a1a;">24</div><div class="t" style="left:28.90px;top:1426.27px;font-size:20px;color:#1a1a1a;">25</div><div class="r" style="left:17px;top:1441px;width:2299px;height:22px;background:#f5f5f5;border-top:2px solid #dcdcdc;border-bottom:1.5px solid #dcdcdc;"></div><div class="r" style="left:2312px;top:1441px;width:20px;height:22px;background:#f5f5f5;border-left:1.5px solid #dcdcdc;border-top:2px solid #dcdcdc;border-bottom:1.5px solid #dcdcdc;"></div><div class="r" style="left:2331px;top:256px;width:58px;height:1207px;background:#f3f3f3;border:1.5px solid #dcdcdc;border-top-right-radius:8px;"></div><svg class="r" style="left:2348px;top:271px;" width="28" height="24" viewBox="0 0 28 24" fill="none" stroke="#111" stroke-width="2" stroke-linecap="round" stroke-linejoin="round"><path d="M2.5 6 H8 Q10.5 6.3 9.5 8.8 L3.5 17 Q2.5 20 5.5 20 H10.5 Q12 20 13 18.5 L20 9 Q21 7.8 21.8 9.5 L24.3 17.3 Q24.8 19.5 22.8 19 L15 15.5" stroke="#111" stroke-width="2"/><path d="M14.5 9 L11.8 13.5 Q11 15.2 13 16" stroke="#111" stroke-width="2"/><circle cx="16.5" cy="4.2" r="1.5" fill="#111" stroke="none"/></svg><svg class="r" style="left:2350px;top:322px;" width="24" height="28" viewBox="0 0 24 28" fill="none" stroke="#111" stroke-width="2" stroke-linecap="round" stroke-linejoin="round"><path d="M12 4 Q10 2.5 8.5 3.5 Q6.5 4.5 6.5 8 V24 M3 10.5 H11" stroke="#111" stroke-width="2"/><path d="M12 15 L18.5 24 M18.5 15 L12 24" stroke="#111" stroke-width="2"/></svg><svg class="r" style="left:2349px;top:375px;" width="26" height="26" viewBox="0 0 26 26" fill="none" stroke="#111" stroke-width="2" stroke-linecap="round" stroke-linejoin="round"><path d="M3 21 V5.5 Q3 3 5.5 3 H20.5 Q23 3 23 5.5 V15 Q23 17.5 20.5 17.5 H7 Z" stroke="#111" stroke-width="2"/><path d="M7 8 H19 M7 12 H10.5" stroke="#111" stroke-width="2"/></svg><svg class="r" style="left:2348px;top:1319px;" width="28" height="28" viewBox="0 0 28 28" fill="none" stroke="#111" stroke-width="2" stroke-linecap="round" stroke-linejoin="round"><path d="M6 17 Q3 15 4 12 L3 9.5 L5.5 6 L8.5 6 L10 3 H14 L15.5 6 L18.5 6 L21 9.5 L20.5 12" stroke="#111" stroke-width="1.8"/><path d="M9.5 13 Q11 10 13.5 11" stroke="#111" stroke-width="1.8"/><path d="M9 18.5 Q13 13 17.5 13 Q22 13 25.5 18.5 Q22 24 17.5 24 Q13 24 9 18.5 Z" stroke="#111" stroke-width="2"/><circle cx="17.5" cy="18.5" r="1.8" fill="#111" stroke="none"/></svg><svg class="r" style="left:2349px;top:1372px;" width="26" height="26" viewBox="0 0 26 26" fill="none" stroke="#111" stroke-width="2" stroke-linecap="round" stroke-linejoin="round"><circle cx="13" cy="13" r="5" stroke="#111" stroke-width="2"/><path d="M13 8 A5 5 0 0 1 13 18 Z" fill="#111" stroke="none"/><path d="M13 1.5 V3.5 M13 22.5 V24.5 M1.5 13 H3.5 M22.5 13 H24.5 M4.9 4.9 L6.3 6.3 M19.7 19.7 L21.1 21.1 M4.9 21.1 L6.3 19.7 M19.7 6.3 L21.1 4.9" stroke="#111" stroke-width="2"/></svg><svg class="r" style="left:2348px;top:1422px;" width="28" height="28" viewBox="0 0 28 28" fill="none" stroke="#111" stroke-width="2" stroke-linecap="round" stroke-linejoin="round"><path d="M3 12.5 H5.5 V19 H3 Z M5.5 12.5 L9 5 Q10.5 3.5 11.5 5.5 L11 11 H14.5 Q16 11.5 15.5 13 L14.5 18 Q14 19 13 19 H5.5" stroke="#111" stroke-width="1.8"/><path d="M18.5 9.5 H23 Q24.5 9.5 24.5 11 V21 Q24.5 22.5 23 22.5 H21 L19 25 L17 22.5 H4.5 Q3 22.5 3 21 V21" stroke="#111" stroke-width="1.8"/></svg><div class="r" style="left:17px;top:1463px;width:2372px;height:49px;background:#efefef;"></div><div class="r" style="left:17px;top:1463px;width:47px;height:49px;background:#e2e2e2;border-right:1.5px solid #d2d2d2;"></div><svg class="r" style="left:26px;top:1473px;" width="30" height="28" viewBox="0 0 30 28" fill="none" stroke="#111" stroke-width="2" stroke-linecap="round" stroke-linejoin="round"><path d="M14.5 3 Q25 3 25 10 Q25 17 15 17 H12 L5 22 L7 16 Q4 14 4 10 Q4 3 14.5 3 Z" stroke="#111" stroke-width="2" fill="#fff"/><circle cx="10" cy="10" r="1.3" fill="#3a4f9a" stroke="none"/><circle cx="14.5" cy="10" r="1.3" fill="#3a4f9a" stroke="none"/><circle cx="19" cy="10" r="1.3" fill="#3a4f9a" stroke="none"/></svg><svg class="r" style="left:82px;top:1481px;" width="20" height="12" viewBox="0 0 20 12" fill="none" stroke="#111" stroke-width="2" stroke-linecap="round" stroke-linejoin="round"><path d="M1 11 L10 1.5 L19 11 Z" fill="#333" stroke="#333" stroke-width="1.5"/></svg><svg class="r" style="left:124px;top:1473px;" width="30" height="30" viewBox="0 0 30 30" fill="none" stroke="#111" stroke-width="2" stroke-linecap="round" stroke-linejoin="round"><circle cx="15" cy="15" r="13.5" fill="#3c8f47" stroke="none"/><path d="M15 8.5 V21.5 M8.5 15 H21.5" stroke="#fff" stroke-width="2.8"/></svg><div class="r" style="left:174px;top:1463px;width:109px;height:38px;background:#fff;border-radius:10px 10px 7px 7px;box-shadow:0 1px 1.5px rgba(0,0,0,0.18);"></div><div class="t" style="left:189.00px;top:1473.56px;font-size:18px;color:#111;font-weight:bold;transform:scaleX(0.9831);transform-origin:0 0;">Sheet1</div><svg class="r" style="left:252px;top:1478px;" width="14" height="9" viewBox="0 0 14 9" fill="none" stroke="#111" stroke-width="2" stroke-linecap="round" stroke-linejoin="round"><path d="M1 1 H13 L7 8 Z" fill="#888" stroke="none"/></svg><div class="r" style="left:184px;top:1496px;width:84px;height:4px;background:#f5780a;border-radius:2px;"></div><svg class="r" style="left:297px;top:1470px;" width="20" height="24" viewBox="0 0 20 24" fill="none" stroke="#111" stroke-width="2" stroke-linecap="round" stroke-linejoin="round"><path d="M5 11 V8 Q5 3.5 10 3.5 Q15 3.5 15 8 V11" stroke="#333" stroke-width="2"/><rect x="2.5" y="10" width="15" height="11" rx="2" fill="#3a3a3a" stroke="none"/></svg><div class="t" style="left:325.00px;top:1472.92px;font-size:19px;color:#1a1a1a;transform:scaleX(1.0382);transform-origin:0 0;">Sheet 2</div><div class="r" style="left:405px;top:1467px;width:1px;height:40px;background:#dcdcdc;"></div><svg class="r" style="left:422px;top:1470px;" width="22" height="24" viewBox="0 0 22 24" fill="none" stroke="#111" stroke-width="2" stroke-linecap="round" stroke-linejoin="round"><path d="M1.5 2.5 Q1.5 1.5 2.5 1.5 H18.5 Q19.5 1.5 19.5 2.5 V17 Q19.5 18 18.5 18 H6 L1.5 22 Z" fill="#3a3a3a" stroke="none"/><text x="10.5" y="14.5" font-family="Liberation Sans" font-size="11" font-weight="bold" fill="#fff" stroke="none" text-anchor="middle">12</text></svg><div class="t" style="left:452.50px;top:1472.92px;font-size:19px;color:#1a1a1a;transform:scaleX(1.0397);transform-origin:0 0;">Sheet 3</div><div class="r" style="left:538px;top:1467px;width:1px;height:40px;background:#dcdcdc;"></div><div class="r" style="left:1945px;top:1463px;width:1.5px;height:49px;background:#d8d8d8;"></div><div class="r" style="left:2006px;top:1463px;width:1.5px;height:49px;background:#d8d8d8;"></div><div class="r" style="left:2081px;top:1463px;width:1.5px;height:49px;background:#d8d8d8;"></div><div class="r" style="left:2142px;top:1463px;width:1.5px;height:49px;background:#d8d8d8;"></div><div class="r" style="left:2331px;top:1463px;width:1.5px;height:49px;background:#d8d8d8;"></div><svg class="r" style="left:1961px;top:1476px;" width="30" height="22" viewBox="0 0 30 22" fill="none" stroke="#111" stroke-width="2" stroke-linecap="round" stroke-linejoin="round"><rect x="2" y="2" width="25" height="17" rx="3" stroke="#111" stroke-width="2.2"/><circle cx="7" cy="7" r="1" fill="#111" stroke="none"/><circle cx="7" cy="11" r="1" fill="#111" stroke="none"/><circle cx="11" cy="7" r="1" fill="#111" stroke="none"/><circle cx="11" cy="11" r="1" fill="#111" stroke="none"/><circle cx="15" cy="7" r="1" fill="#111" stroke="none"/><circle cx="15" cy="11" r="1" fill="#111" stroke="none"/><circle cx="19" cy="7" r="1" fill="#111" stroke="none"/><circle cx="19" cy="11" r="1" fill="#111" stroke="none"/><circle cx="23" cy="7" r="1" fill="#111" stroke="none"/><circle cx="23" cy="11" r="1" fill="#111" stroke="none"/><path d="M11 15 H18.5" stroke="#111" stroke-width="2"/></svg><svg class="r" style="left:2021px;top:1475px;" width="26" height="25" viewBox="0 0 26 25" fill="none" stroke="#111" stroke-width="2" stroke-linecap="round" stroke-linejoin="round"><rect x="2" y="2" width="21" height="21" rx="3" stroke="#111" stroke-width="2.2"/><path d="M9 2 V9 H2 M16 2 V9 H23 M2 16 H9 V23 M23 16 H16 V23" stroke="#111" stroke-width="2"/><rect x="9" y="9" width="7" height="7" fill="#bbb" stroke="none"/></svg><svg class="r" style="left:2055px;top:1485px;" width="14" height="9" viewBox="0 0 14 9" fill="none" stroke="#111" stroke-width="2" stroke-linecap="round" stroke-linejoin="round"><path d="M1 1 H12 L6.5 7.5 Z" fill="#111" stroke="none"/></svg><svg class="r" style="left:2099px;top:1475px;" width="26" height="25" viewBox="0 0 26 25" fill="none" stroke="#111" stroke-width="2" stroke-linecap="round" stroke-linejoin="round"><rect x="2" y="2" width="21" height="21" rx="3" stroke="#111" stroke-width="2.2"/><path d="M12.5 6 L10.5 8 H14.5 Z M12.5 19 L10.5 17 H14.5 Z M6 12.5 L8 10.5 V14.5 Z M19 12.5 L17 10.5 V14.5 Z" fill="#111" stroke="#111" stroke-width="1"/></svg><div class="r" style="left:2161px;top:1485.5px;width:13px;height:3px;background:#444;"></div><div class="r" style="left:2194px;top:1468px;width:86px;height:39px;background:#fff;border:1px solid #e2e2e2;border-radius:6px;"></div><div class="r" style="left:2256px;top:1469px;width:1px;height:37px;background:#e2e2e2;"></div><div class="t" style="left:2203.60px;top:1478.91px;font-size:17px;color:#111;transform:scaleX(0.9908);transform-origin:0 0;">100%</div><svg class="r" style="left:2261.5px;top:1482.25px;" width="15" height="9.5" viewBox="0 0 15 9.5" fill="none" stroke="#111" stroke-width="2" stroke-linecap="round" stroke-linejoin="round"><path d="M2 2 L7.5 7.5 L13 2" stroke="#111" stroke-width="1.8"/></svg><svg class="r" style="left:2298px;top:1480px;" width="16" height="16" viewBox="0 0 16 16" fill="none" stroke="#111" stroke-width="2" stroke-linecap="round" stroke-linejoin="round"><path d="M8 1.5 V14.5 M1.5 8 H14.5" stroke="#444" stroke-width="2.6"/></svg><svg class="r" style="left:2348px;top:1476px;" width="24" height="23" viewBox="0 0 24 23" fill="none" stroke="#111" stroke-width="2" stroke-linecap="round" stroke-linejoin="round"><path d="M3 8 V3 H8 M3 3 L9 9 M21 8 V3 H16 M21 3 L15 9 M3 15 V20 H8 M3 20 L9 14 M21 15 V20 H16 M21 20 L15 14" stroke="#111" stroke-width="2.2"/></svg><div class="t" style="left:159.00px;top:324.48px;font-size:45.5px;color:#111;font-weight:bold;transform:scaleX(0.8664);transform-origin:0 0;">Task List</div><div class="r" style="left:1264px;top:454.5px;width:259px;height:52.0px;background:#f8eaea;"></div><div class="r" style="left:1264px;top:507.5px;width:259px;height:56.700000000000045px;background:#e7f6ea;"></div><div class="r" style="left:1264px;top:565.2px;width:259px;height:56.799999999999955px;background:#f8eaea;"></div><div class="r" style="left:1264px;top:623px;width:259px;height:56.700000000000045px;background:#f8eaea;"></div><div class="r" style="left:1264px;top:680.7px;width:259px;height:56.69999999999993px;background:#e7f6ea;"></div><div class="r" style="left:1264px;top:738.4px;width:259px;height:56.60000000000002px;background:#f8eaea;"></div><div class="r" style="left:1264px;top:796px;width:259px;height:56px;background:#e2eaf8;"></div><div class="r" style="left:149px;top:505.75px;width:2085px;height:1.5px;background:#c9d0e8;"></div><div class="r" style="left:149px;top:563.45px;width:2085px;height:1.5px;background:#c9d0e8;"></div><div class="r" style="left:149px;top:621.25px;width:2085px;height:1.5px;background:#c9d0e8;"></div><div class="r" style="left:149px;top:678.95px;width:2085px;height:1.5px;background:#c9d0e8;"></div><div class="r" style="left:149px;top:736.65px;width:2085px;height:1.5px;background:#c9d0e8;"></div><div class="r" style="left:149px;top:794.25px;width:2085px;height:1.5px;background:#c9d0e8;"></div><div class="r" style="left:149px;top:851.25px;width:2085px;height:1.5px;background:#c9d0e8;"></div><div class="r" style="left:148.25px;top:453.5px;width:1.5px;height:399px;background:#c9d0e8;"></div><div class="r" style="left:679.25px;top:453.5px;width:1.5px;height:399px;background:#c9d0e8;"></div><div class="r" style="left:1003.25px;top:453.5px;width:1.5px;height:399px;background:#c9d0e8;"></div><div class="r" style="left:1262.25px;top:453.5px;width:1.5px;height:399px;background:#c9d0e8;"></div><div class="r" style="left:1523.25px;top:453.5px;width:1.5px;height:399px;background:#c9d0e8;"></div><div class="r" style="left:1941.25px;top:453.5px;width:1.5px;height:399px;background:#c9d0e8;"></div><div class="r" style="left:2232.25px;top:453.5px;width:1.5px;height:399px;background:#c9d0e8;"></div><div class="r" style="left:149px;top:383px;width:2084px;height:70.5px;background:#293776;border-top:2px solid #d3d9ea;border-left:1px solid #c9d0e8;"></div><div class="t" style="left:390.00px;top:406.37px;font-size:26.5px;color:#fff;transform:scaleX(0.8991);transform-origin:0 0;-webkit-text-stroke:0.3px #fff;">Task</div><div class="r" style="left:624.0px;top:409px;width:23px;height:21.5px;background:#fff;border:2px solid #8a8a8a;border-radius:5px;"></div><svg class="r" style="left:628.0px;top:415.0px;" width="15" height="10" viewBox="0 0 15 10" fill="none" stroke="#111" stroke-width="2" stroke-linecap="round" stroke-linejoin="round"><path d="M2 2 L7.5 8 L13 2" stroke="#111" stroke-width="2"/></svg><div class="t" style="left:805.50px;top:406.37px;font-size:26.5px;color:#fff;transform:scaleX(0.9872);transform-origin:0 0;-webkit-text-stroke:0.3px #fff;">Owner</div><div class="r" style="left:950.5px;top:409px;width:23px;height:21.5px;background:#fff;border:2px solid #8a8a8a;border-radius:5px;"></div><svg class="r" style="left:954.5px;top:415.0px;" width="15" height="10" viewBox="0 0 15 10" fill="none" stroke="#111" stroke-width="2" stroke-linecap="round" stroke-linejoin="round"><path d="M2 2 L7.5 8 L13 2" stroke="#111" stroke-width="2"/></svg><div class="t" style="left:1098.60px;top:406.37px;font-size:26.5px;color:#fff;transform:scaleX(0.9108);transform-origin:0 0;-webkit-text-stroke:0.3px #fff;">Status</div><div class="r" style="left:1212.2px;top:409px;width:23px;height:21.5px;background:#fff;border:2px solid #8a8a8a;border-radius:5px;"></div><svg class="r" style="left:1216.2px;top:415.0px;" width="15" height="10" viewBox="0 0 15 10" fill="none" stroke="#111" stroke-width="2" stroke-linecap="round" stroke-linejoin="round"><path d="M2 2 L7.5 8 L13 2" stroke="#111" stroke-width="2"/></svg><div class="t" style="left:1350.00px;top:406.37px;font-size:26.5px;color:#fff;-webkit-text-stroke:0.3px #fff;">Priority</div><div class="r" style="left:1467.2px;top:409px;width:23px;height:21.5px;background:#fff;border:2px solid #8a8a8a;border-radius:5px;"></div><svg class="r" style="left:1471.2px;top:415.0px;" width="15" height="10" viewBox="0 0 15 10" fill="none" stroke="#111" stroke-width="2" stroke-linecap="round" stroke-linejoin="round"><path d="M2 2 L7.5 8 L13 2" stroke="#111" stroke-width="2"/></svg><div class="t" style="left:1678.70px;top:406.37px;font-size:26.5px;color:#fff;transform:scaleX(0.9518);transform-origin:0 0;-webkit-text-stroke:0.3px #fff;">Due Date</div><div class="r" style="left:1878.5px;top:409px;width:23px;height:21.5px;background:#fff;border:2px solid #8a8a8a;border-radius:5px;"></div><svg class="r" style="left:1882.5px;top:415.0px;" width="15" height="10" viewBox="0 0 15 10" fill="none" stroke="#111" stroke-width="2" stroke-linecap="round" stroke-linejoin="round"><path d="M2 2 L7.5 8 L13 2" stroke="#111" stroke-width="2"/></svg><div class="t" style="left:2054.30px;top:406.37px;font-size:26.5px;color:#fff;transform:scaleX(0.9436);transform-origin:0 0;-webkit-text-stroke:0.3px #fff;">Notes</div><div class="r" style="left:2177.3px;top:409px;width:23px;height:21.5px;background:#fff;border:2px solid #8a8a8a;border-radius:5px;"></div><svg class="r" style="left:2181.3px;top:415.0px;" width="15" height="10" viewBox="0 0 15 10" fill="none" stroke="#111" stroke-width="2" stroke-linecap="round" stroke-linejoin="round"><path d="M2 2 L7.5 8 L13 2" stroke="#111" stroke-width="2"/></svg><div class="t" style="left:170.10px;top:463.52px;font-size:22.3px;color:#111;transform:scaleX(0.9650);transform-origin:0 0;-webkit-text-stroke:0.3px #111;">Paint quality check</div><div class="t" style="left:699.20px;top:463.52px;font-size:22.3px;color:#111;transform:scaleX(0.9750);transform-origin:0 0;-webkit-text-stroke:0.3px #111;">Alicia Jones</div><div class="t" style="left:1021.00px;top:463.52px;font-size:22.3px;color:#111;transform:scaleX(0.9550);transform-origin:0 0;-webkit-text-stroke:0.3px #111;">In Progress</div><div class="t" style="left:1279.30px;top:463.52px;font-size:22.3px;color:#b94a48;transform:scaleX(0.9650);transform-origin:0 0;-webkit-text-stroke:0.3px #b94a48;">High</div><div class="t" style="left:1676.34px;top:463.52px;font-size:22.3px;color:#111;transform:scaleX(0.9690);transform-origin:0 0;-webkit-text-stroke:0.3px #111;">26 Aug, 2024</div><svg class="r" style="left:1224.0px;top:470.59999999999997px;" width="20" height="12" viewBox="0 0 20 12" fill="none" stroke="#111" stroke-width="2" stroke-linecap="round" stroke-linejoin="round"><path d="M2 2 L10.0 10 L18 2" stroke="#555" stroke-width="2"/></svg><svg class="r" style="left:1485.0px;top:470.59999999999997px;" width="20" height="12" viewBox="0 0 20 12" fill="none" stroke="#111" stroke-width="2" stroke-linecap="round" stroke-linejoin="round"><path d="M2 2 L10.0 10 L18 2" stroke="#555" stroke-width="2"/></svg><div class="t" style="left:170.10px;top:521.40px;font-size:22.3px;color:#111;transform:scaleX(0.9650);transform-origin:0 0;-webkit-text-stroke:0.3px #111;">Prepare client list for walk through</div><div class="t" style="left:699.20px;top:521.40px;font-size:22.3px;color:#111;transform:scaleX(0.9750);transform-origin:0 0;-webkit-text-stroke:0.3px #111;">Monica Hemsworth</div><div class="t" style="left:1021.00px;top:521.40px;font-size:22.3px;color:#111;transform:scaleX(0.9550);transform-origin:0 0;-webkit-text-stroke:0.3px #111;">Open</div><div class="t" style="left:1279.30px;top:521.40px;font-size:22.3px;color:#4e9f55;transform:scaleX(0.9650);transform-origin:0 0;-webkit-text-stroke:0.3px #4e9f55;">Medium</div><div class="t" style="left:1676.34px;top:521.40px;font-size:22.3px;color:#111;transform:scaleX(0.9690);transform-origin:0 0;-webkit-text-stroke:0.3px #111;">17 Aug, 2024</div><svg class="r" style="left:1224.0px;top:528.48px;" width="20" height="12" viewBox="0 0 20 12" fill="none" stroke="#111" stroke-width="2" stroke-linecap="round" stroke-linejoin="round"><path d="M2 2 L10.0 10 L18 2" stroke="#555" stroke-width="2"/></svg><svg class="r" style="left:1485.0px;top:528.48px;" width="20" height="12" viewBox="0 0 20 12" fill="none" stroke="#111" stroke-width="2" stroke-linecap="round" stroke-linejoin="round"><path d="M2 2 L10.0 10 L18 2" stroke="#555" stroke-width="2"/></svg><div class="t" style="left:170.10px;top:579.28px;font-size:22.3px;color:#111;transform:scaleX(0.9650);transform-origin:0 0;-webkit-text-stroke:0.3px #111;">Inspection work items</div><div class="t" style="left:699.20px;top:579.28px;font-size:22.3px;color:#111;transform:scaleX(0.9750);transform-origin:0 0;-webkit-text-stroke:0.3px #111;">Alicia Jones</div><div class="t" style="left:1021.00px;top:579.28px;font-size:22.3px;color:#111;transform:scaleX(0.9550);transform-origin:0 0;-webkit-text-stroke:0.3px #111;">Open</div><div class="t" style="left:1279.30px;top:579.28px;font-size:22.3px;color:#b94a48;transform:scaleX(0.9650);transform-origin:0 0;-webkit-text-stroke:0.3px #b94a48;">High</div><div class="t" style="left:1676.34px;top:579.28px;font-size:22.3px;color:#111;transform:scaleX(0.9690);transform-origin:0 0;-webkit-text-stroke:0.3px #111;">22 Aug, 2024</div><svg class="r" style="left:1224.0px;top:586.36px;" width="20" height="12" viewBox="0 0 20 12" fill="none" stroke="#111" stroke-width="2" stroke-linecap="round" stroke-linejoin="round"><path d="M2 2 L10.0 10 L18 2" stroke="#555" stroke-width="2"/></svg><svg class="r" style="left:1485.0px;top:586.36px;" width="20" height="12" viewBox="0 0 20 12" fill="none" stroke="#111" stroke-width="2" stroke-linecap="round" stroke-linejoin="round"><path d="M2 2 L10.0 10 L18 2" stroke="#555" stroke-width="2"/></svg><div class="t" style="left:170.10px;top:637.16px;font-size:22.3px;color:#111;transform:scaleX(0.9650);transform-origin:0 0;-webkit-text-stroke:0.3px #111;">Electrical insulation</div><div class="t" style="left:699.20px;top:637.16px;font-size:22.3px;color:#111;transform:scaleX(0.9750);transform-origin:0 0;-webkit-text-stroke:0.3px #111;">Chaitanya Mella</div><div class="t" style="left:1021.00px;top:637.16px;font-size:22.3px;color:#111;transform:scaleX(0.9550);transform-origin:0 0;-webkit-text-stroke:0.3px #111;">In Progress</div><div class="t" style="left:1279.30px;top:637.16px;font-size:22.3px;color:#b94a48;transform:scaleX(0.9650);transform-origin:0 0;-webkit-text-stroke:0.3px #b94a48;">High</div><div class="t" style="left:1676.34px;top:637.16px;font-size:22.3px;color:#111;transform:scaleX(0.9690);transform-origin:0 0;-webkit-text-stroke:0.3px #111;">16 Aug, 2024</div><svg class="r" style="left:1224.0px;top:644.24px;" width="20" height="12" viewBox="0 0 20 12" fill="none" stroke="#111" stroke-width="2" stroke-linecap="round" stroke-linejoin="round"><path d="M2 2 L10.0 10 L18 2" stroke="#555" stroke-width="2"/></svg><svg class="r" style="left:1485.0px;top:644.24px;" width="20" height="12" viewBox="0 0 20 12" fill="none" stroke="#111" stroke-width="2" stroke-linecap="round" stroke-linejoin="round"><path d="M2 2 L10.0 10 L18 2" stroke="#555" stroke-width="2"/></svg><div class="t" style="left:170.10px;top:695.04px;font-size:22.3px;color:#111;transform:scaleX(0.9650);transform-origin:0 0;-webkit-text-stroke:0.3px #111;">Electrical walk through</div><div class="t" style="left:699.20px;top:695.04px;font-size:22.3px;color:#111;transform:scaleX(0.9750);transform-origin:0 0;-webkit-text-stroke:0.3px #111;">Chaitanya Mella</div><div class="t" style="left:1021.00px;top:695.04px;font-size:22.3px;color:#111;transform:scaleX(0.9550);transform-origin:0 0;-webkit-text-stroke:0.3px #111;">Open</div><div class="t" style="left:1279.30px;top:695.04px;font-size:22.3px;color:#4e9f55;transform:scaleX(0.9650);transform-origin:0 0;-webkit-text-stroke:0.3px #4e9f55;">Medium</div><div class="t" style="left:1676.34px;top:695.04px;font-size:22.3px;color:#111;transform:scaleX(0.9690);transform-origin:0 0;-webkit-text-stroke:0.3px #111;">14 Aug, 2024</div><svg class="r" style="left:1224.0px;top:702.12px;" width="20" height="12" viewBox="0 0 20 12" fill="none" stroke="#111" stroke-width="2" stroke-linecap="round" stroke-linejoin="round"><path d="M2 2 L10.0 10 L18 2" stroke="#555" stroke-width="2"/></svg><svg class="r" style="left:1485.0px;top:702.12px;" width="20" height="12" viewBox="0 0 20 12" fill="none" stroke="#111" stroke-width="2" stroke-linecap="round" stroke-linejoin="round"><path d="M2 2 L10.0 10 L18 2" stroke="#555" stroke-width="2"/></svg><div class="t" style="left:170.10px;top:752.92px;font-size:22.3px;color:#111;transform:scaleX(0.9650);transform-origin:0 0;-webkit-text-stroke:0.3px #111;">Celing check</div><div class="t" style="left:699.20px;top:752.92px;font-size:22.3px;color:#111;transform:scaleX(0.9750);transform-origin:0 0;-webkit-text-stroke:0.3px #111;">Alicia Jones</div><div class="t" style="left:1021.00px;top:752.92px;font-size:22.3px;color:#111;transform:scaleX(0.9550);transform-origin:0 0;-webkit-text-stroke:0.3px #111;">Closed</div><div class="t" style="left:1279.30px;top:752.92px;font-size:22.3px;color:#b94a48;transform:scaleX(0.9650);transform-origin:0 0;-webkit-text-stroke:0.3px #b94a48;">High</div><div class="t" style="left:1676.34px;top:752.92px;font-size:22.3px;color:#111;transform:scaleX(0.9690);transform-origin:0 0;-webkit-text-stroke:0.3px #111;">19 Aug, 2024</div><svg class="r" style="left:1224.0px;top:760.0px;" width="20" height="12" viewBox="0 0 20 12" fill="none" stroke="#111" stroke-width="2" stroke-linecap="round" stroke-linejoin="round"><path d="M2 2 L10.0 10 L18 2" stroke="#555" stroke-width="2"/></svg><svg class="r" style="left:1485.0px;top:760.0px;" width="20" height="12" viewBox="0 0 20 12" fill="none" stroke="#111" stroke-width="2" stroke-linecap="round" stroke-linejoin="round"><path d="M2 2 L10.0 10 L18 2" stroke="#555" stroke-width="2"/></svg><div class="t" style="left:170.10px;top:810.80px;font-size:22.3px;color:#111;transform:scaleX(0.9650);transform-origin:0 0;-webkit-text-stroke:0.3px #111;">Insall electric service panel</div><div class="t" style="left:699.20px;top:810.80px;font-size:22.3px;color:#111;transform:scaleX(0.9750);transform-origin:0 0;-webkit-text-stroke:0.3px #111;">Chaitanya Mella</div><div class="t" style="left:1021.00px;top:810.80px;font-size:22.3px;color:#111;transform:scaleX(0.9550);transform-origin:0 0;-webkit-text-stroke:0.3px #111;">Open</div><div class="t" style="left:1279.30px;top:810.80px;font-size:22.3px;color:#3f5ba8;transform:scaleX(0.9650);transform-origin:0 0;-webkit-text-stroke:0.3px #3f5ba8;">Low</div><div class="t" style="left:1676.34px;top:810.80px;font-size:22.3px;color:#111;transform:scaleX(0.9690);transform-origin:0 0;-webkit-text-stroke:0.3px #111;">16 Aug, 2024</div><svg class="r" style="left:1224.0px;top:817.8800000000001px;" width="20" height="12" viewBox="0 0 20 12" fill="none" stroke="#111" stroke-width="2" stroke-linecap="round" stroke-linejoin="round"><path d="M2 2 L10.0 10 L18 2" stroke="#555" stroke-width="2"/></svg><svg class="r" style="left:1485.0px;top:817.8800000000001px;" width="20" height="12" viewBox="0 0 20 12" fill="none" stroke="#111" stroke-width="2" stroke-linecap="round" stroke-linejoin="round"><path d="M2 2 L10.0 10 L18 2" stroke="#555" stroke-width="2"/></svg><svg class="r" style="left:2220px;top:838px;" width="14" height="14" viewBox="0 0 14 14" fill="none" stroke="#111" stroke-width="2" stroke-linecap="round" stroke-linejoin="round"><path d="M12.5 2 V12.5 H2 Z" stroke="#555" stroke-width="1.5" fill="none"/></svg><div class="r" style="left:1399.5px;top:679px;width:193px;height:132px;background:#fff;border:1.6px solid #707070;border-radius:10px;"></div><div class="t" style="left:1431.80px;top:700.72px;font-size:22.3px;color:#111;transform:scaleX(0.9281);transform-origin:0 0;-webkit-text-stroke:0.3px #111;">High</div><div class="t" style="left:1431.80px;top:735.92px;font-size:22.3px;color:#111;transform:scaleX(0.9596);transform-origin:0 0;-webkit-text-stroke:0.3px #111;">Medium</div><div class="t" style="left:1431.80px;top:771.12px;font-size:22.3px;color:#111;transform:scaleX(0.9024);transform-origin:0 0;-webkit-text-stroke:0.3px #111;">Low</div><div class="r" style="left:148px;top:877px;width:728px;height:520px;border:2px solid #d6dbee;"></div><div class="r" style="left:893px;top:877px;width:739px;height:520px;border:2px solid #d6dbee;"></div><div class="r" style="left:1652px;top:879px;width:582px;height:519px;border:2px solid #d6dbee;"></div><div class="t" style="left:166.00px;top:909.99px;font-size:37.7px;color:#111;transform:scaleX(0.9383);transform-origin:0 0;-webkit-text-stroke:0.8px #111;">Status</div><div class="t" style="left:943.20px;top:909.79px;font-size:37.7px;color:#111;transform:scaleX(1.0213);transform-origin:0 0;-webkit-text-stroke:0.8px #111;">Priority</div><svg class="r" style="left:150px;top:880px;" width="720" height="510" viewBox="0 0 720 510" fill="none" stroke="#111" stroke-width="2" stroke-linecap="round" stroke-linejoin="round"><path d="M361.00 126.00 A169 169 0 1 1 287.67 447.26 L324.55 370.68 A84 84 0 1 0 361.00 211.00 Z" fill="#76b874" stroke="none"/><path d="M287.67 447.26 A169 169 0 0 1 228.87 189.63 L295.33 242.63 A84 84 0 0 0 324.55 370.68 Z" fill="#e2b443" stroke="none"/><path d="M228.87 189.63 A169 169 0 0 1 361.00 126.00 L361.00 211.00 A84 84 0 0 0 295.33 242.63 Z" fill="#e3736a" stroke="none"/><path d="M272 129 Q283 131 287 142" stroke="#e3736a" stroke-width="1.8"/><path d="M171 339 Q186 338 196 334" stroke="#e2b443" stroke-width="1.8"/><path d="M526 336 Q535 339 550 339" stroke="#76b874" stroke-width="1.8"/></svg><div class="t" style="left:345.50px;top:1001.47px;font-size:20px;color:#111;transform:scaleX(0.9165);transform-origin:0 0;-webkit-text-stroke:0.2px #111;">Closed</div><div class="t" style="left:206.20px;top:1211.27px;font-size:20px;color:#111;transform:scaleX(0.9169);transform-origin:0 0;-webkit-text-stroke:0.2px #111;">In Progress</div><div class="t" style="left:718.90px;top:1211.57px;font-size:20px;color:#111;transform:scaleX(0.9550);transform-origin:0 0;-webkit-text-stroke:0.2px #111;">Open</div><svg class="r" style="left:0;top:0" width="2400" height="1512" viewBox="0 0 2400 1512" fill="none"><path d="M974 990.5 H1581" stroke="#dddddd" stroke-width="1.5"/><path d="M974 1081 H1581" stroke="#dddddd" stroke-width="1.5"/><path d="M974 1170.5 H1581" stroke="#dddddd" stroke-width="1.5"/><path d="M974 1258 H1581" stroke="#dddddd" stroke-width="1.5"/><path d="M974 1348 H1581" stroke="#dddddd" stroke-width="1.5"/><rect x="1088" y="990.5" width="121.5" height="357.5" rx="6" fill="#cd6f6b" stroke="none"/><rect x="1218" y="1172" width="127" height="178.5" rx="6" fill="#7fcb8a" stroke="none"/><rect x="1353" y="1260" width="122" height="90.5" rx="6" fill="#7aa3e3" stroke="none"/></svg><div class="t" style="left:943.10px;top:982.72px;font-size:17.7px;color:#111;-webkit-text-stroke:0.2px #111;">4</div><div class="t" style="left:943.10px;top:1065.62px;font-size:17.7px;color:#111;-webkit-text-stroke:0.2px #111;">3</div><div class="t" style="left:943.10px;top:1148.62px;font-size:17.7px;color:#111;-webkit-text-stroke:0.2px #111;">2</div><div class="t" style="left:943.10px;top:1231.02px;font-size:17.7px;color:#111;-webkit-text-stroke:0.2px #111;">1</div><div class="t" style="left:943.10px;top:1313.22px;font-size:17.7px;color:#111;-webkit-text-stroke:0.2px #111;">0</div><div class="t" style="left:1128.50px;top:963.06px;font-size:18.6px;color:#111;transform:scaleX(1.0183);transform-origin:0 0;-webkit-text-stroke:0.2px #111;">High</div><div class="t" style="left:1244.10px;top:1140.26px;font-size:18.6px;color:#111;transform:scaleX(1.0574);transform-origin:0 0;-webkit-text-stroke:0.2px #111;">Medium</div><div class="t" style="left:1396.20px;top:1230.26px;font-size:18.6px;color:#111;transform:scaleX(1.0877);transform-origin:0 0;-webkit-text-stroke:0.2px #111;">Low</div><div class="t" style="left:1700.10px;top:1016.02px;font-size:23.6px;color:#111;transform:scaleX(0.9844);transform-origin:0 0;-webkit-text-stroke:0.5px #111;">Open</div><div class="t" style="left:1882.20px;top:1005.17px;font-size:33.7px;color:#4b9b4e;transform:scaleX(0.9947);transform-origin:0 0;-webkit-text-stroke:1.0px #4b9b4e;">4</div><div class="t" style="left:1700.10px;top:1075.02px;font-size:23.6px;color:#111;transform:scaleX(0.9420);transform-origin:0 0;-webkit-text-stroke:0.5px #111;">In Progress</div><div class="t" style="left:1883.00px;top:1064.47px;font-size:33.7px;color:#e3b23f;transform:scaleX(0.9091);transform-origin:0 0;-webkit-text-stroke:1.0px #e3b23f;">2</div><div class="t" style="left:1700.10px;top:1133.42px;font-size:23.6px;color:#111;transform:scaleX(0.9415);transform-origin:0 0;-webkit-text-stroke:0.5px #111;">Closed</div><div class="t" style="left:1885.00px;top:1123.77px;font-size:33.7px;color:#b8443f;transform:scaleX(0.8021);transform-origin:0 0;-webkit-text-stroke:1.0px #b8443f;">1</div><div class="t" style="left:2015.50px;top:1016.02px;font-size:23.6px;color:#111;transform:scaleX(0.9670);transform-origin:0 0;-webkit-text-stroke:0.5px #111;">High</div><div class="t" style="left:2167.50px;top:1005.17px;font-size:33.7px;color:#b8443f;transform:scaleX(0.9733);transform-origin:0 0;-webkit-text-stroke:1.0px #b8443f;">4</div><div class="t" style="left:2015.50px;top:1075.02px;font-size:23.6px;color:#111;-webkit-text-stroke:0.5px #111;">Medium</div><div class="t" style="left:2168.00px;top:1064.47px;font-size:33.7px;color:#4b9b4e;transform:scaleX(0.9091);transform-origin:0 0;-webkit-text-stroke:1.0px #4b9b4e;">2</div><div class="t" style="left:2015.50px;top:1133.42px;font-size:23.6px;color:#111;transform:scaleX(0.9494);transform-origin:0 0;-webkit-text-stroke:0.5px #111;">Low</div><div class="t" style="left:2170.00px;top:1123.77px;font-size:33.7px;color:#3f5ba8;transform:scaleX(0.8021);transform-origin:0 0;-webkit-text-stroke:1.0px #3f5ba8;">1</div><div class="t" style="left:1880.70px;top:1257.91px;font-size:23.5px;color:#111;transform:scaleX(0.9452);transform-origin:0 0;-webkit-text-stroke:0.5px #111;">Pending Issues</div><div class="t" style="left:1948.00px;top:1304.76px;font-size:31px;color:#888;transform:scaleX(1.0465);transform-origin:0 0;-webkit-text-stroke:1.0px #888;">6</div>
</div><div id="frame"></div></body></html>
